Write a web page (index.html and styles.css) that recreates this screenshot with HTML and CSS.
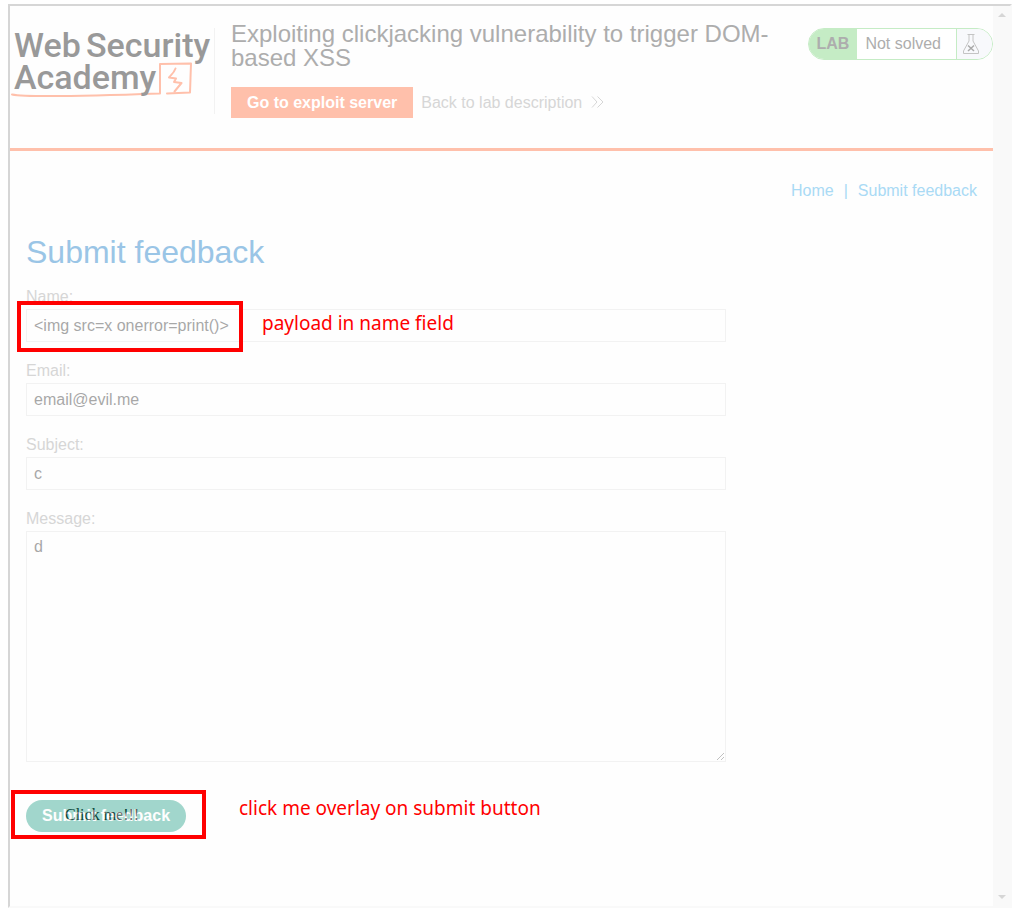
FILE: index.html
```html
<!DOCTYPE html>
<html lang="en">
<head>
<meta charset="utf-8">
<title>Exploiting clickjacking vulnerability to trigger DOM-based XSS</title>
<link rel="stylesheet" href="styles.css">
</head>
<body>
<div class="frame">
  <div class="page">
    <header class="lab-header">
      <a class="logo" href="#" aria-label="Web Security Academy">
        <svg class="logo-art" viewBox="0 0 204 86" width="204" height="86">
          <path class="logo-line" d="M2 66.500C14 69 80 68 150 65.500L150 36L181 35.500L180 64.500L157 65.500"/>
          <path class="logo-line" d="M165.500 40.500C164 45 160 48 159 49.500L166 50.500L164 54L171.500 55L164.500 63.500"/>
          <g class="logo-text">
            <text x="4" y="29">Web</text>
            <text x="76" y="29">Security</text>
            <text x="4" y="61">Academy</text>
          </g>
        </svg>
      </a>
      <div class="title-block">
        <h2 class="lab-title">Exploiting clickjacking vulnerability to trigger DOM-based XSS</h2>
        <div class="actions">
          <button class="exploit" type="button">Go to exploit server</button>
          <a class="back" href="#">Back to lab description
            <svg width="13" height="12" viewBox="0 0 13 12"><path d="M1 0.500L6 6L1 11.500M6.500 0.500L12 6L6.500 11.500"/></svg>
          </a>
        </div>
      </div>
      <div class="status">
        <span class="status-lab">LAB</span>
        <span class="status-text">Not solved</span>
        <span class="status-icon">
          <svg width="18" height="22" viewBox="0 0 18 22"><path d="M5.500 1.500H12.500M7 2V8L1.500 18V20.500H16.500V18L11 8V2"/><path class="cross" d="M6 12.500L12 18M12 12.500L6 18"/></svg>
        </span>
      </div>
    </header>
    <main class="content">
      <nav class="nav"><a href="#">Home</a><span>|</span><a href="#">Submit feedback</a></nav>
      <h1 class="heading">Submit feedback</h1>
      <form class="form">
        <label for="name">Name:</label>
        <div class="field">
          <input id="name" type="text" value="&lt;img src=x onerror=print()&gt;">
          <div class="mark mark-name"></div>
          <p class="note note-name">payload in name field</p>
        </div>
        <label for="email">Email:</label>
        <div class="field"><input id="email" type="text" value="email@evil.me"></div>
        <label for="subject">Subject:</label>
        <div class="field"><input id="subject" type="text" value="c"></div>
        <label for="message">Message:</label>
        <div class="field"><textarea id="message">d</textarea></div>
        <div class="field submit-row">
          <div class="decoy">Click me!!!</div>
          <button class="submit" type="submit">Submit feedback</button>
          <div class="mark mark-submit"></div>
          <p class="note note-submit">click me overlay on submit button</p>
        </div>
      </form>
    </main>
  </div>
  <div class="scrollbar"><span class="arrow up"></span><span class="arrow down"></span></div>
</div>
</body>
</html>
```
FILE: styles.css
```css
* { box-sizing: border-box; }
body {
  margin: 0;
  padding: 4px 11px 12px 8px;
  background: #fff;
  font: 16px/24px "Liberation Sans", Arial, sans-serif;
}
.frame {
  display: flex;
  min-height: calc(100vh - 16px);
  background: #fefefe;
  border: 2px solid #f9f9f9;
  border-top-color: #d6d6d6;
  border-left-color: #d6d6d6;
}
.page { flex: 1; min-width: 0; }
.scrollbar {
  width: 17px;
  display: flex;
  flex-direction: column;
  justify-content: space-between;
  align-items: center;
  padding: 7px 0;
  background: #f9f9f9;
}
.arrow { border: 4px solid transparent; border-top-width: 0; border-bottom-width: 0; }
.up { border-bottom: 4px solid #d6d6d6; }
.down { border-top: 4px solid #d6d6d6; }

.lab-header {
  display: flex;
  align-items: flex-start;
  padding: 16px 0 30px;
  border-bottom: 3px solid #ffc0ab;
}
.logo { flex: none; margin-top: 6px; border-right: 1px solid #f2f2f2; }
.logo-art { display: block; overflow: visible; }
.logo-text { font: 500 34px Roboto, sans-serif; fill: #999; }
.logo-line { fill: none; stroke: #ffc0ab; stroke-width: 2; stroke-linejoin: round; stroke-linecap: round; }
.title-block { flex: 1; margin: 0 24px 0 16px; }
.lab-title { margin: 0; max-width: 560px; font-size: 24px; line-height: 24px; font-weight: 400; color: #adadad; }
.actions { display: flex; align-items: center; gap: 8px; margin-top: 17px; }
.exploit {
  height: 31px;
  padding: 0 16px;
  border: 0;
  background: #ffc0ab;
  color: #fff;
  font: bold 16px "Liberation Sans", Arial, sans-serif;
}
.back { color: #d6d6d6; text-decoration: none; }
.back svg { margin-left: 4px; fill: none; stroke: #d6d6d6; }
.status {
  display: flex;
  height: 32px;
  margin-top: 6px;
  line-height: 30px;
  border: 1px solid #c5ecc5;
  border-radius: 16px;
  overflow: hidden;
  color: #adadad;
  white-space: nowrap;
}
.status-lab { padding: 0 8px; background: #c5ecc5; font-weight: bold; }
.status-text { padding: 0 15px 0 8px; background: #fff; }
.status-icon { display: flex; align-items: center; padding: 0 12px 0 5px; border-left: 1px solid #c5ecc5; background: #f8f9fc; }
.status-icon svg { fill: none; stroke: #c4c4c4; }
.status-icon .cross { stroke: #aaa; stroke-width: 1.5; }

.content { padding: 28px 16px 0; }
.nav { display: flex; justify-content: flex-end; gap: 10px; color: #a9daf5; }
.nav a { color: #a9daf5; text-decoration: none; }
.heading { margin: 29px 0 0; font-size: 32px; line-height: 40px; font-weight: 400; color: #9ac5e6; }
.form { max-width: 700px; padding-top: 13px; }
.form label { display: block; color: #d6d6d6; }
.field { position: relative; margin-bottom: 17px; }
.field input, .field textarea {
  display: block;
  width: 100%;
  height: 33px;
  padding: 0 7px;
  border: 1px solid #e1e1e1;
  border-radius: 0;
  background: transparent;
  color: #262626;
  opacity: 0.4;
  font: 16px "Liberation Sans", Arial, sans-serif;
}
.field textarea { height: 231px; padding-top: 6px; resize: vertical; }
.submit-row { margin: 38px 0 0; isolation: isolate; }
.submit {
  display: block;
  height: 32px;
  padding: 0 16px;
  border: 0;
  border-radius: 16px;
  background: #199d82;
  color: #fff;
  opacity: 0.4;
  font: bold 16px "Liberation Sans", Arial, sans-serif;
}
.decoy {
  position: absolute;
  z-index: -1;
  left: 39px;
  top: 3px;
  color: #000;
  font-family: "Liberation Serif", "Times New Roman", serif;
}
.mark { position: absolute; border: 4px solid #f00; pointer-events: none; }
.mark-name { left: -9px; top: -8px; width: 226px; height: 51px; }
.mark-submit { left: -15px; top: -10px; width: 195px; height: 49px; }
.note { position: absolute; margin: 0; color: #f00; font: 19px/24px "Noto Sans", sans-serif; white-space: nowrap; }
.note-name { left: 236px; top: 2px; }
.note-submit { left: 213px; top: -4px; }
```
